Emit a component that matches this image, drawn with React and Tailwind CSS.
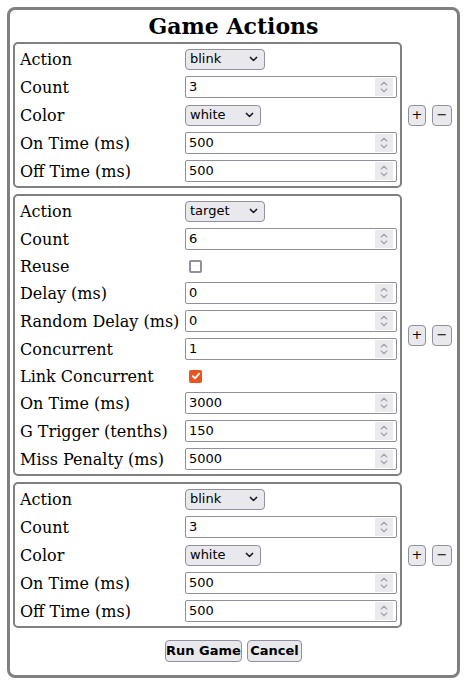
import { useState } from 'react'

const actions = [
  {
    fields: [
      { label: 'Action', type: 'select', value: 'blink', width: 'w-[80px]' },
      { label: 'Count', type: 'number', value: '3' },
      { label: 'Color', type: 'select', value: 'white', width: 'w-[76px]' },
      { label: 'On Time (ms)', type: 'number', value: '500' },
      { label: 'Off Time (ms)', type: 'number', value: '500' },
    ],
  },
  {
    fields: [
      { label: 'Action', type: 'select', value: 'target', width: 'w-[80px]' },
      { label: 'Count', type: 'number', value: '6' },
      { label: 'Reuse', type: 'check', value: false },
      { label: 'Delay (ms)', type: 'number', value: '0' },
      { label: 'Random Delay (ms)', type: 'number', value: '0' },
      { label: 'Concurrent', type: 'number', value: '1' },
      { label: 'Link Concurrent', type: 'check', value: true },
      { label: 'On Time (ms)', type: 'number', value: '3000' },
      { label: 'G Trigger (tenths)', type: 'number', value: '150' },
      { label: 'Miss Penalty (ms)', type: 'number', value: '5000' },
    ],
  },
  {
    fields: [
      { label: 'Action', type: 'select', value: 'blink', width: 'w-[80px]' },
      { label: 'Count', type: 'number', value: '3' },
      { label: 'Color', type: 'select', value: 'white', width: 'w-[76px]' },
      { label: 'On Time (ms)', type: 'number', value: '500' },
      { label: 'Off Time (ms)', type: 'number', value: '500' },
    ],
  },
]

const sans = "[font-family:'DejaVu_Sans',sans-serif]"
const serif = "[font-family:'DejaVu_Serif',serif]"

function Chevron({ className }) {
  return (
    <svg viewBox="0 0 10 6" className={className} fill="none" stroke="currentColor" strokeWidth="1.6" strokeLinecap="round" strokeLinejoin="round">
      <path d="M1.5 1.2 L5 4.6 L8.5 1.2" />
    </svg>
  )
}

function SelectBox({ value, width }) {
  return (
    <div className={`${width} h-[21px] flex items-center justify-between pl-[4px] pr-[6px] rounded-[4px] border border-[#8f8f9d] bg-[#e9e9ed] text-[13px] text-black ${sans}`}>
      <span>{value}</span>
      <Chevron className="w-[9px] h-[6px] text-[#1b1b1b]" />
    </div>
  )
}

function NumberBox({ value }) {
  return (
    <div className={`w-[212px] h-[22px] flex items-center justify-between pl-[3px] pr-[3px] rounded-[2px] border border-[#8f8f9d] bg-white text-[13px] text-black ${sans}`}>
      <span>{value}</span>
      <div className="w-[18px] h-[18px] bg-[#ebebef] flex flex-col items-center justify-center gap-[2px] text-[#a3a3ad]">
        <Chevron className="w-[8px] h-[5px] rotate-180" />
        <Chevron className="w-[8px] h-[5px]" />
      </div>
    </div>
  )
}

function CheckBox({ checked }) {
  if (checked) {
    return (
      <div className="ml-[4px] w-[13px] h-[13px] rounded-[2px] bg-[#e95420] flex items-center justify-center">
        <svg viewBox="0 0 12 12" className="w-[10px] h-[10px]" fill="none" stroke="white" strokeWidth="2.2" strokeLinecap="round" strokeLinejoin="round">
          <path d="M2.2 6.3 L4.8 8.8 L9.8 3.2" />
        </svg>
      </div>
    )
  }
  return <div className="ml-[4px] w-[13px] h-[13px] rounded-[2px] border-2 border-[#8f8f9d] bg-white" />
}

function SmallButton({ children, className }) {
  return (
    <button className={`h-[21px] flex items-center justify-center whitespace-nowrap rounded-[4px] border border-[#8f8f9d] bg-[#e9e9ed] text-[13px] text-black ${sans} ${className}`}>
      {children}
    </button>
  )
}

function ActionBox({ fields }) {
  return (
    <div className="flex items-center">
      <div className="w-[389px] border-2 border-[#808080] rounded-[5px] p-[2px] grid grid-cols-[166px_212px] gap-x-[2px] gap-y-[2px]">
        {fields.map((f, i) => (
          <div key={i} className="contents">
            <div className={`${f.type === 'check' ? 'h-[24px]' : 'h-[26px]'} flex items-center pl-[3px] pt-[2px] text-[16px] text-black ${serif} whitespace-nowrap`}>
              {f.label}
            </div>
            <div className={`${f.type === 'check' ? 'h-[24px]' : 'h-[26px]'} flex items-center`}>
              {f.type === 'select' && <SelectBox value={f.value} width={f.width} />}
              {f.type === 'number' && <NumberBox value={f.value} />}
              {f.type === 'check' && <CheckBox checked={f.value} />}
            </div>
          </div>
        ))}
      </div>
      <SmallButton className="ml-[6px] w-[18px]">+</SmallButton>
      <SmallButton className="ml-[6px] w-[20px]">−</SmallButton>
    </div>
  )
}

export default function App() {
  const [list] = useState(actions)
  return (
    <div className="p-[7px] bg-white">
      <div className="w-[453px] h-[671px] border-[3px] border-[#808080] rounded-[8px] px-[3px] flex flex-col">
        <div className={`h-[32px] flex items-center justify-center text-[22px] font-bold text-black ${serif}`}>
          Game Actions
        </div>
        <div className="flex flex-col gap-[6px]">
          {list.map((a, i) => (
            <ActionBox key={i} fields={a.fields} />
          ))}
        </div>
        <div className="mt-[12px] flex justify-center gap-[5px]">
          <SmallButton className="w-[77px] h-[22px] font-bold">Run Game</SmallButton>
          <SmallButton className="w-[55px] h-[22px] font-bold">Cancel</SmallButton>
        </div>
      </div>
    </div>
  )
}
